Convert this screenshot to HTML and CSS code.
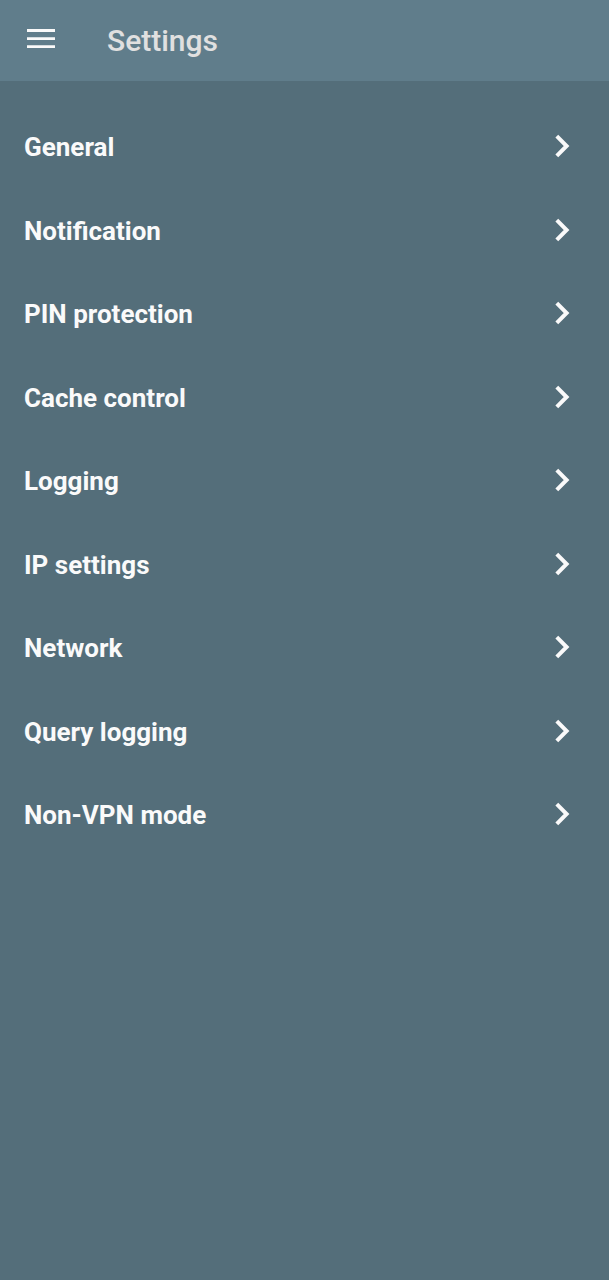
FILE: index.html
```html
<!DOCTYPE html>
<html lang="en">
<head>
<meta charset="utf-8">
<meta name="viewport" content="width=device-width, initial-scale=1">
<title>Settings</title>
<link rel="stylesheet" href="styles.css">
</head>
<body>
<header class="app-bar">
  <button class="menu-button" type="button" aria-label="Open menu">
    <svg class="menu-icon" viewBox="0 0 28 20" aria-hidden="true"><path d="M0 0h28v2.9H0zM0 8.2h28v2.9H0zM0 16.2h28v2.9H0z"/></svg>
  </button>
  <h1 class="title">Settings</h1>
</header>
<main>
  <nav class="settings-list" aria-label="Settings">
    <a class="row" href="#general">General<svg class="chevron" viewBox="0 0 16 24" aria-hidden="true"><path d="M1.8 2.2l9.8 9.8-9.8 9.8"/></svg></a>
    <a class="row" href="#notification">Notification<svg class="chevron" viewBox="0 0 16 24" aria-hidden="true"><path d="M1.8 2.2l9.8 9.8-9.8 9.8"/></svg></a>
    <a class="row" href="#pin">PIN protection<svg class="chevron" viewBox="0 0 16 24" aria-hidden="true"><path d="M1.8 2.2l9.8 9.8-9.8 9.8"/></svg></a>
    <a class="row" href="#cache">Cache control<svg class="chevron" viewBox="0 0 16 24" aria-hidden="true"><path d="M1.8 2.2l9.8 9.8-9.8 9.8"/></svg></a>
    <a class="row" href="#logging">Logging<svg class="chevron" viewBox="0 0 16 24" aria-hidden="true"><path d="M1.8 2.2l9.8 9.8-9.8 9.8"/></svg></a>
    <a class="row" href="#ip">IP settings<svg class="chevron" viewBox="0 0 16 24" aria-hidden="true"><path d="M1.8 2.2l9.8 9.8-9.8 9.8"/></svg></a>
    <a class="row" href="#network">Network<svg class="chevron" viewBox="0 0 16 24" aria-hidden="true"><path d="M1.8 2.2l9.8 9.8-9.8 9.8"/></svg></a>
    <a class="row" href="#query">Query logging<svg class="chevron" viewBox="0 0 16 24" aria-hidden="true"><path d="M1.8 2.2l9.8 9.8-9.8 9.8"/></svg></a>
    <a class="row" href="#non-vpn">Non-VPN mode<svg class="chevron" viewBox="0 0 16 24" aria-hidden="true"><path d="M1.8 2.2l9.8 9.8-9.8 9.8"/></svg></a>
  </nav>
</main>
</body>
</html>
```
FILE: styles.css
```css
* { box-sizing: border-box; }
body {
  margin: 0;
  min-height: 100vh;
  background: #546e7a;
  color: #fafafa;
  font-family: Roboto, "Liberation Sans", sans-serif;
}
.app-bar {
  display: flex;
  align-items: flex-start;
  gap: 44px;
  padding: 16px 19px;
  background: #607d8b;
}
.menu-button {
  display: flex;
  padding: 13px 8px;
  border: 0;
  background: none;
  color: #fafafa;
  cursor: pointer;
}
.menu-icon {
  width: 28px;
  height: 20px;
  fill: currentColor;
}
.title {
  margin: 0;
  color: #e0e0e0;
  font-size: 30px;
  font-weight: 500;
  line-height: 49px;
}
.settings-list {
  display: grid;
  grid-auto-rows: minmax(84px, auto) minmax(83px, auto);
  padding: 33px 38px 33px 24px;
}
.row {
  display: flex;
  align-items: flex-start;
  justify-content: space-between;
  padding: 16px 0;
  color: inherit;
  font-size: 26px;
  font-weight: 700;
  line-height: 34px;
  text-decoration: none;
}
.chevron {
  width: 16px;
  height: 24px;
  margin-top: 4px;
  fill: none;
  stroke: currentColor;
  stroke-width: 4;
}
```
